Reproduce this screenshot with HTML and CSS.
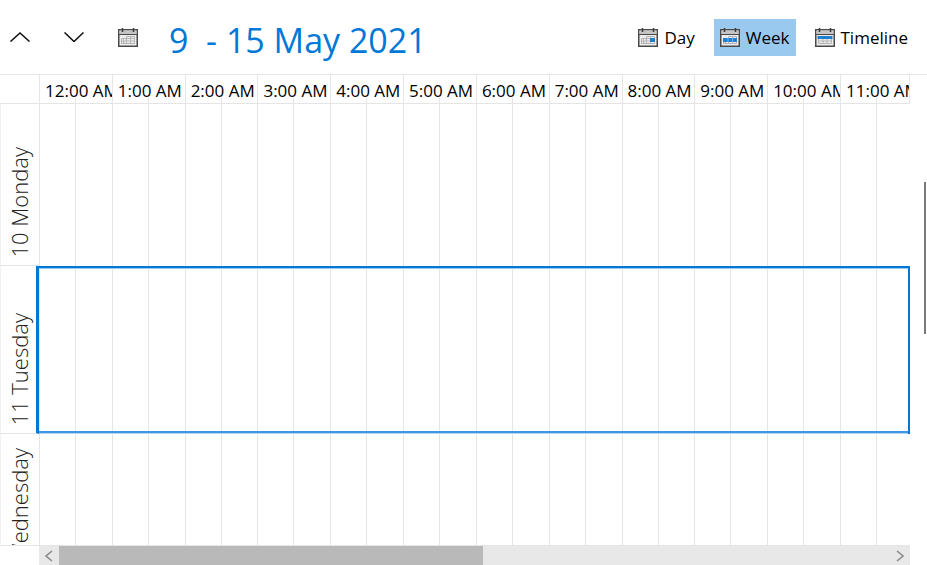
FILE: index.html
```
<!DOCTYPE html>
<html lang="en">
<head>
    <meta charset="utf-8">
    <title>Calendar</title>
    <link rel="stylesheet" href="styles.css">
</head>
<body>
    <svg class="sprite" aria-hidden="true">
        <symbol id="calendar" viewBox="0 0 20 19">
            <rect x="0.75" y="1.75" width="18.5" height="16.5" fill="#ededed" stroke="#4a4a4a" stroke-width="1.5"/>
            <path d="M1.5 2.5h17V6h-17z" fill="#c4c4c4"/>
            <path d="M1 6.5h18" stroke="#4a4a4a"/>
            <path d="M4.5 0v4M15.5 0v4" stroke="#3a3a3a" stroke-width="1.5"/>
        </symbol>
        <symbol id="days" viewBox="0 0 20 19">
            <path d="M8.5 8.5h8v7h-13v-5h13M3.5 13h13M8.5 8.5v7M12.5 8.5v7M5.5 10.5v5" fill="none" stroke="#b4b4b4"/>
        </symbol>
        <symbol id="rows" viewBox="0 0 20 19">
            <path d="M3.5 8v7.5h13V8M3.5 13h13M8 8v7.5M12 8v7.5" fill="none" stroke="#b4b4b4"/>
        </symbol>
    </svg>

    <div class="calendar">
        <div class="toolbar">
            <button class="nav" aria-label="Previous"><svg width="20" height="10"><path d="M0.5 9.5 10 1l9.5 8.5"/></svg></button>
            <button class="nav" aria-label="Next"><svg width="20" height="10"><path d="M0.5 0.5 10 9.5l9.5-9"/></svg></button>
            <button class="nav" aria-label="Go to date"><svg class="icon" width="20" height="19"><use href="#calendar"/><use href="#days"/></svg></button>
            <h1>9  - 15 May 2021</h1>
            <div class="views">
                <button class="view"><svg class="icon" width="20" height="19"><use href="#calendar"/><use href="#days"/><path d="M12 10h5v4h-5z" fill="#1f7fd0"/></svg>Day</button>
                <button class="view active"><svg class="icon" width="20" height="19"><use href="#calendar"/><use href="#days"/><path d="M3 10h14v4H3z" fill="#1f7fd0"/><path d="M8 10v4M12.5 10v4" stroke="#7db4e4"/></svg>Week</button>
                <button class="view"><svg class="icon" width="20" height="19"><use href="#calendar"/><use href="#rows"/><path d="M2.5 8h15v3h-15z" fill="#1f7fd0"/></svg>Timeline</button>
            </div>
        </div>

        <div class="schedule">
            <table>
                <colgroup>
                    <col class="day-col">
                    <col span="11">
                    <col class="last-col">
                </colgroup>
                <thead>
                    <tr>
                        <td></td>
                        <th>12:00 AM</th>
                        <th>1:00 AM</th>
                        <th>2:00 AM</th>
                        <th>3:00 AM</th>
                        <th>4:00 AM</th>
                        <th>5:00 AM</th>
                        <th>6:00 AM</th>
                        <th>7:00 AM</th>
                        <th>8:00 AM</th>
                        <th>9:00 AM</th>
                        <th>10:00 AM</th>
                        <th>11:00 AM</th>
                    </tr>
                </thead>
                <tbody>
                    <tr class="first">
                        <th><span>10 Monday</span></th>
                        <td></td><td></td><td></td><td></td><td></td><td></td>
                        <td></td><td></td><td></td><td></td><td></td><td></td>
                    </tr>
                    <tr class="selected">
                        <th><span>11 Tuesday</span></th>
                        <td></td><td></td><td></td><td></td><td></td><td></td>
                        <td></td><td></td><td></td><td></td><td></td><td></td>
                    </tr>
                    <tr>
                        <th><span>12 Wednesday</span></th>
                        <td></td><td></td><td></td><td></td><td></td><td></td>
                        <td></td><td></td><td></td><td></td><td></td><td></td>
                    </tr>
                </tbody>
            </table>
        </div>

        <div class="scrollbar">
            <button aria-label="Scroll left"><svg width="8" height="12"><path d="M7 1 1 6l6 5"/></svg></button>
            <div class="track"><div class="thumb"></div></div>
            <button aria-label="Scroll right"><svg width="8" height="12"><path d="m1 1 6 5-6 5"/></svg></button>
        </div>
        <div class="vertical-thumb"></div>
    </div>
</body>
</html>
```
FILE: styles.css
```
* { box-sizing: border-box; }
body { margin: 0; font-family: "Open Sans", "Noto Sans", sans-serif; font-size: 17px; color: #000; background: #fff; }
button { margin: 0; padding: 0; border: none; background: none; font: inherit; color: inherit; cursor: pointer; }
.sprite { position: absolute; width: 0; height: 0; }
.calendar { position: relative; display: flex; flex-direction: column; height: 100vh; overflow: hidden; }

.toolbar { display: flex; align-items: center; height: 75px; flex: none; padding-right: 13px; border-bottom: 1px solid #e5e5e5; }
.nav { display: flex; align-items: center; justify-content: center; width: 40px; height: 40px; margin-right: 14px; }
.nav path { fill: none; stroke: #111; stroke-width: 1.5; }
.nav svg, .view svg { display: block; flex: none; }
.toolbar h1 { margin: 0; padding: 5px 0 0 7px; font-size: 34px; line-height: 40px; font-weight: 400; color: #0078d7; white-space: pre; }
.views { display: flex; gap: 13px; margin-left: auto; }
.view { display: flex; align-items: center; gap: 6px; height: 37px; padding: 0 6px; }
.view.active { background: #99c9ef; }

.schedule { flex: 1; min-height: 0; overflow: hidden; margin-right: 17px; border-bottom: 1px solid #e5e5e5; }
table { width: 100%; table-layout: fixed; border-collapse: separate; border-spacing: 0; }
th, td { padding: 0; font-weight: 400; text-align: left; border-bottom: 1px solid #e5e5e5; }
.day-col { width: 39px; }
.last-col { width: 70px; }
thead th { height: 29px; padding: 3px 0 0 5px; line-height: 25px; overflow: hidden; white-space: nowrap; border-left: 1px solid #e5e5e5; background: linear-gradient(#e5e5e5, #e5e5e5) 35px 100% / 1px 5px no-repeat; }
thead th:last-child { border-right: 1px solid #e5e5e5; }

tbody tr { height: 168px; }
tbody tr.first { height: 162px; }
tbody th { padding: 0 0 7px 3px; vertical-align: bottom; border-left: 1px solid #f0f0f0; }
tbody th span { display: block; writing-mode: vertical-rl; transform: rotate(180deg); font-size: 22px; line-height: 30px; font-weight: 300; white-space: nowrap; color: #222; }
tbody td { border-left: 1px solid #e5e5e5; background: linear-gradient(#e5e5e5, #e5e5e5) 35px 0 / 1px 100% no-repeat; }

/* selected day: the outline is painted over the hour lines */
.first td { border-bottom: none; }
.selected th { border-right: 3px solid #0078d7; }
.selected td {
    border: none;
    background:
        linear-gradient(#0078d7 2px, #99c9ef 2px) 0 0 / 100% 3px no-repeat,
        linear-gradient(#3f97e0 2px, #b2d6f3 2px) 0 100% / 100% 3px no-repeat,
        linear-gradient(#e5e5e5, #e5e5e5) 0 0 / 1px 100% no-repeat,
        linear-gradient(#e5e5e5, #e5e5e5) 36px 0 / 1px 100% no-repeat;
}
.selected td:last-child { border-right: 2px solid #0078d7; }

.scrollbar { display: flex; flex: none; height: 19px; margin: 0 17px 0 39px; background: #e8e8e8; }
.scrollbar button { width: 20px; display: flex; align-items: center; justify-content: center; }
.scrollbar path { fill: none; stroke: #888; stroke-width: 1.5; }
.track { flex: 1; }
.thumb { width: 51%; height: 100%; background: #b9b9b9; }
.vertical-thumb { position: absolute; right: 1px; top: 182px; width: 2px; height: 152px; background: #7a7a7a; }
```
